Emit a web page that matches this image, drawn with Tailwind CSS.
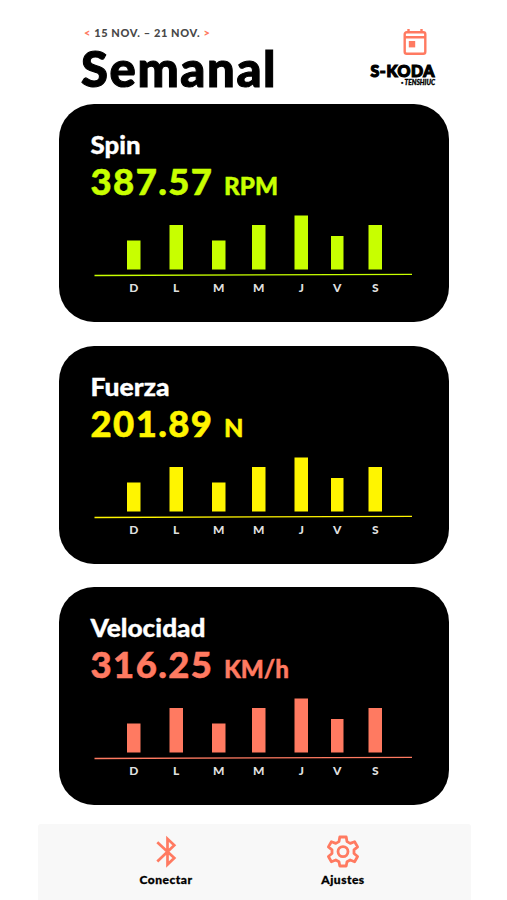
<!DOCTYPE html>
<html lang="es">
<head>
  <meta charset="UTF-8">
  <meta name="viewport" content="width=device-width, initial-scale=1.0">
  <title>S-KODA - Semanal</title>
  <script src="https://cdn.jsdelivr.net/npm/@tailwindcss/browser@4"></script>
</head>
<body class="bg-white font-['Lato','Open_Sans',sans-serif] w-[507px] h-[900px] overflow-hidden flex flex-col">
  <header class="h-[104px] shrink-0 pl-[81px] pr-[71px] flex justify-between">
    <div class="pt-[26px]">
      <p class="pl-[3px] text-[11px] leading-[14px] font-black text-[#484848] whitespace-nowrap tracking-[0.6px]"><span class="text-[#ff7a61]">&lt;</span> 15 NOV. – 21 NOV. <span class="text-[#ff7a61]">&gt;</span></p>
      <h1 class="text-[49px] leading-[56px] font-black text-black tracking-[1.6px] [-webkit-text-stroke:1.1px_#000]">Semanal</h1>
    </div>
    <div class="pt-[28px] w-[67px] flex flex-col items-end">
      <svg class="w-[24px] h-[28px] mr-[9px]" viewBox="0 0 24 28" fill="none" stroke="#ff7a61" stroke-width="2.4">
        <rect x="1.7" y="4.3" width="20.6" height="21.4" rx="2"/>
        <path d="M2 9.3h20M5.5 1v4M18.5 1v4"/>
        <rect x="5.8" y="13" width="6.4" height="6.4" fill="#ff7a61" stroke="none"/>
      </svg>
      <svg class="w-[67px] h-[16px] mt-[6px] overflow-visible" viewBox="0 0 67 16">
        <text x="1.5" y="15.2" textLength="64.5" font-size="16" font-weight="900" letter-spacing="0.6" lengthAdjust="spacingAndGlyphs" stroke="#000" stroke-width="1.2">S-KODA</text>
      </svg>
      <svg class="w-[36px] h-[8px] mt-[1px] overflow-visible" viewBox="0 0 36 8">
        <text x="1" y="6" textLength="34" lengthAdjust="spacingAndGlyphs" font-size="6.5" font-weight="900" font-style="italic" stroke="#000" stroke-width="0.3"><tspan font-size="4" dy="-1">•</tspan><tspan dy="1"> TENSHIUC</tspan></text>
      </svg>
    </div>
  </header>

  <main id="cards" class="flex flex-col gap-[23.5px] pl-[59px]"></main>

  <nav class="mt-auto ml-[38px] mr-[36px] h-[76px] shrink-0 bg-[#f8f8f8] rounded-t-[3px] flex text-black">
    <a class="w-[256px] pt-[11px] flex flex-col items-center">
      <svg class="w-[32px] h-[33px]" viewBox="0 0 32 33" fill="none" stroke="#ff7a61" stroke-width="2.7">
        <path d="M7.3 7.3L24.3 23L17.5 29.5V3.8L24.3 10.3L7.3 26.5"/>
      </svg>
      <span class="mt-[3px] text-[12px] leading-[18px] font-black tracking-[0.5px] [-webkit-text-stroke:0.3px_#000]">Conectar</span>
    </a>
    <a class="w-[98px] pt-[11px] flex flex-col items-center">
      <svg class="w-[34px] h-[33px]" viewBox="0 0 34 33" fill="none" stroke="#ff7a61" stroke-width="2.8" stroke-linejoin="round">
        <path d="M13.8 2h6.4l.8 4.6 3.2 1.8 4.4-1.7 3 5.2-3.6 3v3.6l3.6 3-3 5.2-4.4-1.7-3.2 1.8-.8 4.2h-6.4l-.8-4.2L9.8 25l-4.4 1.7-3-5.2 3.6-3v-3.6l-3.6-3 3-5.2 4.4 1.7L13 6.6z"/>
        <circle cx="17" cy="16.6" r="5"/>
      </svg>
      <span class="mt-[3px] text-[12px] leading-[18px] font-black tracking-[0.5px] [-webkit-text-stroke:0.3px_#000]">Ajustes</span>
    </a>
  </nav>

  <script>
    const cards = [
      { title: 'Spin', value: '387.57', unit: 'RPM', color: '#c8ff00', titleWidth: 50, unitWidth: 54 },
      { title: 'Fuerza', value: '201.89', unit: 'N', color: '#fff500', titleWidth: 79, unitWidth: 19.5 },
      { title: 'Velocidad', value: '316.25', unit: 'KM/h', color: '#ff7a61', titleWidth: 115, unitWidth: 65 }
    ];
    // x, ancho y alto de cada barra
    const days = [
      ['D', 68, 13.5, 29], ['L', 110.5, 13.5, 44.5], ['M', 153, 13.5, 29], ['M', 193, 13.5, 44.5],
      ['J', 235.5, 13.5, 54], ['V', 272, 12.5, 33.5], ['S', 309.5, 13.5, 44.5]
    ];

    document.getElementById('cards').innerHTML = cards.map(c => `
      <section class="w-[390px] h-[218px] shrink-0 bg-black rounded-[35px] overflow-hidden">
        <svg class="block w-[390px] h-[218px]" viewBox="0 0 390 218" fill="${c.color}" font-weight="900">
          <text x="31.5" y="49.5" font-size="24" fill="#fff" stroke="#fff" stroke-width="0.3" textLength="${c.titleWidth}" lengthAdjust="spacingAndGlyphs">${c.title}</text>
          <text x="31.5" y="91" font-size="36.5" stroke="${c.color}" stroke-width="0.5" textLength="121.5">${c.value}</text>
          <text x="165" y="91" font-size="24" stroke="${c.color}" stroke-width="0.4" textLength="${c.unitWidth}" lengthAdjust="spacingAndGlyphs">${c.unit}</text>
          ${days.map(d => `<rect x="${d[1]}" y="${165.5 - d[3]}" width="${d[2]}" height="${d[3]}"/>
          <text x="${d[1] + d[2] / 2}" y="187.5" font-size="12" fill="#dedede" text-anchor="middle">${d[0]}</text>`).join('')}
          <path d="M35.5 171.5L353 170.3" stroke="${c.color}" stroke-width="1.3"/>
        </svg>
      </section>`).join('');
  </script>
</body>
</html>
